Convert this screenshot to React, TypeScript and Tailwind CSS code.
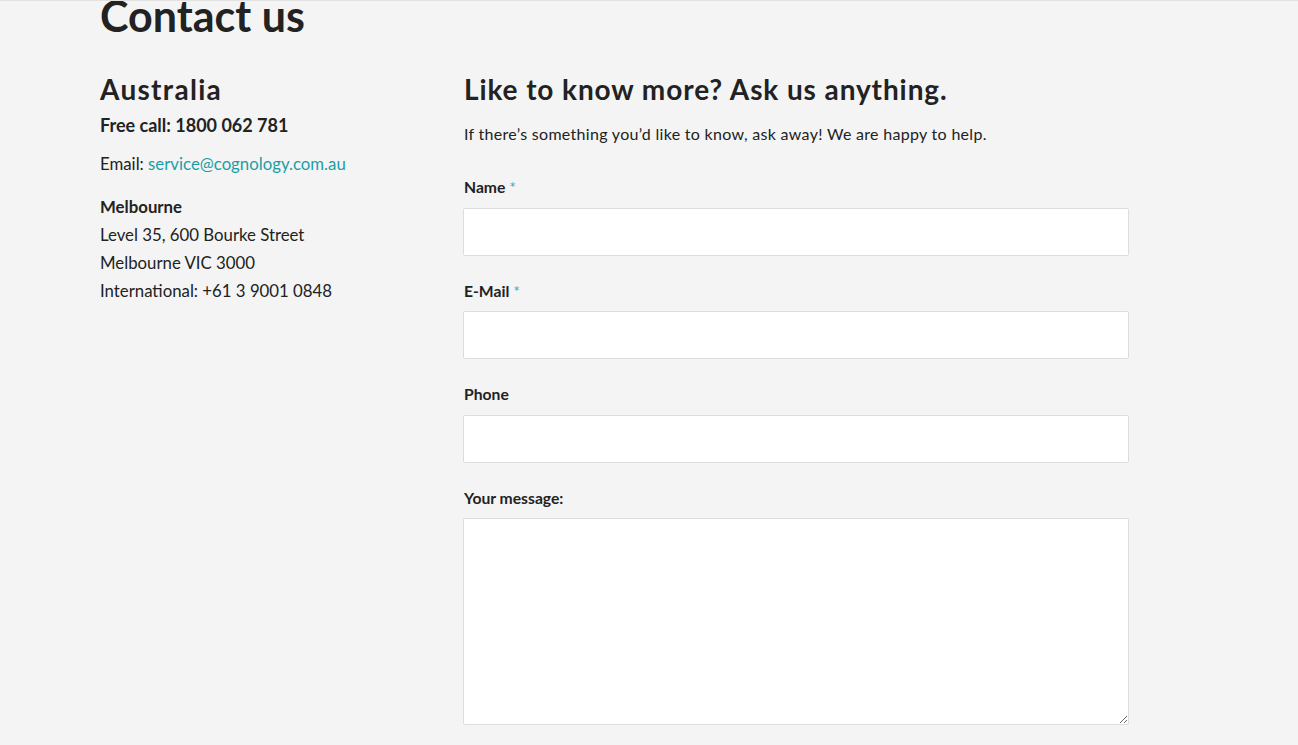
import React from "react";

const label = "block text-[15.7px] font-bold text-[#222] leading-[20px]";
const input = "block w-full h-[48px] bg-white border border-[#dddddd] rounded-[2px] outline-none";

export default function App() {
  return (
    <div className="min-h-[745px] w-full bg-[#f4f4f4] border-t border-[#e2e2e2] overflow-hidden" style={{ fontFamily: "Lato, 'Noto Sans', sans-serif" }}>
      <div className="w-[1029px] ml-[100px] text-[#222]">
        <h1 className="text-[43px] font-bold leading-none mt-[-7px]">Contact us</h1>
        <div className="flex mt-[35px]">
          <div className="w-[363px] shrink-0">
            <h2 className="text-[28px] font-bold leading-[34px] tracking-[1.3px]">Australia</h2>
            <p className="text-[18px] font-bold leading-[28px] mt-[5px]">Free call: 1800 062 781</p>
            <p className="text-[16.8px] leading-[28px] mt-[11px]">
              Email: <a className="text-[#1a9ea6]">service@cognology.com.au</a>
            </p>
            <div className="text-[16.8px] leading-[28px] mt-[15px]">
              <p className="font-bold">Melbourne</p>
              <p>Level 35, 600 Bourke Street</p>
              <p>Melbourne VIC 3000</p>
              <p>International: +61 3 9001 0848</p>
            </div>
          </div>
          <div className="flex-1">
            <h2 className="text-[28px] font-bold leading-[34px] tracking-[0.9px] pl-[1px]">Like to know more? Ask us anything.</h2>
            <p className="text-[16px] leading-[28px] mt-[14px] tracking-[0.3px] pl-[1px]">If there’s something you’d like to know, ask away! We are happy to help.</p>
            <form className="mt-[29px] flex flex-col">
              <label className={label + " pl-[1px]"}>Name <span className="text-[#3aaec0] font-normal">*</span></label>
              <input className={input + " mt-[11px]"} />
              <label className={label + " mt-[25px] pl-[1px]"}>E-Mail <span className="text-[#3aaec0] font-normal">*</span></label>
              <input className={input + " mt-[10px]"} />
              <label className={label + " mt-[25px] pl-[1px]"}>Phone</label>
              <input className={input + " mt-[11px]"} />
              <label className={label + " mt-[25px] pl-[1px]"}>Your message:</label>
              <textarea className="block w-full h-[207px] mt-[10px] bg-white border border-[#dddddd] rounded-[2px] outline-none resize-y" />
            </form>
          </div>
        </div>
      </div>
    </div>
  );
}
